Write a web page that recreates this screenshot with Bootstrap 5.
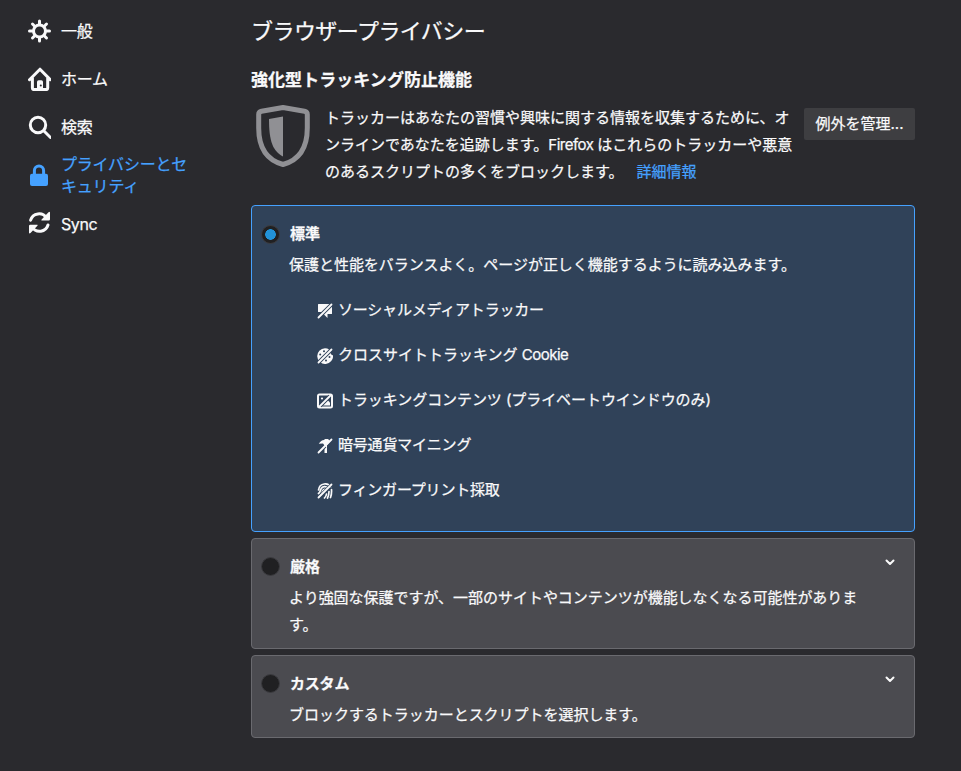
<!DOCTYPE html>
<html lang="ja">
<head>
<meta charset="utf-8">
<meta name="viewport" content="width=device-width, initial-scale=1">
<title>ブラウザープライバシー</title>
<link rel="stylesheet" href="https://cdn.jsdelivr.net/npm/bootstrap@5.3.0/dist/css/bootstrap.min.css">
<style>
  body { background: #2a2a2e; color: #f9f9fa; font-family: Inter, "Noto Sans CJK JP", sans-serif; font-size: 15px; line-height: 27px; min-height: 771px; overflow: hidden; -webkit-text-stroke: .25px currentColor; }
  .side { width: 251px; padding: 7px 0 0 28px; }
  .side .nav-link { height: 48px; padding: 0; color: #f9f9fa; font-size: 16px; line-height: 22px; gap: 10px; }
  .side .nav-link.active { color: #45a1ff; }
  .side svg { width: 23px; height: 24px; flex: none; }
  .side .label { letter-spacing: -.2px; white-space: nowrap; }
  .side .latin { letter-spacing: -.4px; padding-top: 1px; }
  .pane { width: 664px; padding-top: 15px; }
  .page-title { font-size: 22px; line-height: 32px; letter-spacing: -.55px; font-weight: 400; margin: 0 0 20px; }
  .section-title { font-size: 17px; line-height: 26px; letter-spacing: .05px; font-weight: 700; margin: 0 0 11px; }
  .intro { height: 101px; }
  .shield { width: 64px; height: 64px; margin-right: 10px; }
  .intro-text { width: 479px; white-space: nowrap; }
  .intro-text a { margin-left: 13px; }
  .accent { color: #45a1ff; }
  .latin { letter-spacing: -.5px; }
  .btn-manage, .btn-manage:hover { width: 111px; height: 32px; background: #3e3e41; color: #f9f9fa; border: 0; border-radius: 2px; font-size: 15px; line-height: 32px; margin-top: 4px; }
  .option { border: 1px solid #6a6a6f; border-radius: 4px; background: #4b4b50; padding: 14px 10px 0 9px; margin-bottom: 6px; }
  .option.selected { background: #304259; border-color: #45a1ff; }
  .h-standard { height: 327px; } .h-strict { height: 111px; } .h-custom { height: 83px; }
  .option-title { font-weight: 700; margin-left: 10px; }
  .option .form-check-input { width: 19px; height: 19px; margin: 0 0 1px; background: #202022; border: 1px solid #3b3b3f; box-shadow: none; }
  .option .form-check-input:checked { margin: 1px 0 0; background: radial-gradient(circle, #2292d8 0 5px, #202022 5.6px); }
  .desc { margin: 4px 0 0 28px; white-space: nowrap; letter-spacing: -.03px; }
  .trackers { margin: 18px 0 0 56px; }
  .trackers li { height: 27px; margin-bottom: 18px; gap: 5px; white-space: nowrap; }
  .trackers svg { width: 16px; height: 16px; margin-top: 2px; }
  .trackers .gap-line { stroke: #304259; stroke-width: 3.8; fill: none; }
  .trackers .slash { stroke: currentColor; stroke-width: 1.8; stroke-linecap: round; fill: none; }
  .tight { letter-spacing: -.2px; }
  .tight-less { letter-spacing: -.07px; }
  .chev { width: 10px; height: 7px; margin: -8px 9px 0 auto; }
</style>
</head>
<body class="d-flex">
<aside class="side flex-shrink-0">
  <nav class="nav flex-column flex-nowrap">
    <a class="nav-link d-flex align-items-center" href="#"><svg viewBox="0 0 23 24"><g transform="translate(11.5 12)" fill="none" stroke="currentColor"><circle r="6" stroke-width="3"/><g stroke-width="3" stroke-linecap="round"><path d="M0-7V-10M0 7V10M-7 0H-10M7 0H10M5-5L7-7M-5-5L-7-7M5 5L7 7M-5 5L-7 7"/></g></g></svg><span class="label">一般</span></a>
    <a class="nav-link d-flex align-items-center" href="#"><svg viewBox="0 0 23 24"><path d="M1.5 12.7L12 2.2 22.3 12.7M4.4 11V21.1Q4.4 22.6 5.9 22.6H18.2Q19.7 22.6 19.7 21.1V11" fill="none" stroke="currentColor" stroke-width="3" stroke-linecap="round" stroke-linejoin="round"/><path d="M9 23V15Q9 13.3 10.7 13.3H13.3Q15 13.3 15 15V23Z" fill="currentColor"/><circle cx="12.8" cy="18.5" r="1" fill="#2a2a2e"/></svg><span class="label">ホーム</span></a>
    <a class="nav-link d-flex align-items-center" href="#"><svg viewBox="0 0 23 24"><g fill="none" stroke="currentColor" stroke-width="3" stroke-linecap="round"><circle cx="10" cy="10" r="7.7"/><path d="M16 16L22.3 22.3"/></g></svg><span class="label">検索</span></a>
    <a class="nav-link active d-flex align-items-center" href="#"><svg viewBox="0 0 23 24"><path d="M6.4 12V7.5a4.6 4.6 0 0 1 9.2 0V12" fill="none" stroke="currentColor" stroke-width="3"/><rect x="2" y="10.8" width="18" height="12.2" rx="2" fill="currentColor"/></svg><span class="label">プライバシーとセ<br>キュリティ</span></a>
    <a class="nav-link d-flex align-items-center" href="#"><svg viewBox="0 0 23 24"><g fill="none" stroke="currentColor" stroke-width="3" stroke-linecap="round"><path d="M2.6 9.2A8.8 8.8 0 0 1 18.5 7M20 14A8.8 8.8 0 0 1 4.2 16.3"/></g><path d="M22 1.5V8.3Q22 9.5 20.8 9.5H13.8Q12.8 9.5 13.6 8.6L20.5 1.3Q21.8.2 22 1.5ZM1 21.7V15Q1 13.8 2.2 13.8H9.2Q10.2 13.8 9.4 14.7L2.5 22Q1.2 23 1 21.7Z" fill="currentColor"/></svg><span class="label latin">Sync</span></a>
  </nav>
</aside>
<main class="pane flex-shrink-0">
  <h1 class="page-title">ブラウザープライバシー</h1>
  <h2 class="section-title">強化型トラッキング防止機能</h2>
  <section class="intro d-flex align-items-start">
    <svg class="shield flex-shrink-0" viewBox="0 0 64 64"><path d="M32 3.5L53.5 7.2Q56.3 7.8 56.3 10.5V24C56.3 44 48.5 56 32 60.5 15.5 56 7.7 44 7.7 24V10.5Q7.7 7.8 10.5 7.2Z" fill="none" stroke="#909094" stroke-width="5" stroke-linejoin="round"/><path d="M32 12.5V52.5C22 47 18 38 18 15Z" fill="#909094"/></svg>
    <div class="intro-text">トラッカーはあなたの習慣や興味に関する情報を収集するために、オ<br>ンラインであなたを追跡します。<span class="latin">Firefox </span>はこれらのトラッカーや悪意<br>のあるスクリプトの多くをブロックします。<a class="accent text-decoration-none" href="#">詳細情報</a></div>
    <button class="btn btn-manage p-0" type="button">例外を管理...</button>
  </section>
  <section class="option selected h-standard">
    <label class="d-flex align-items-center"><input class="form-check-input" type="radio" name="level" checked><span class="option-title">標準</span></label>
    <p class="desc">保護と性能をバランスよく。ページが正しく機能するように読み込みます。</p>
    <ul class="trackers list-unstyled">
      <li class="d-flex align-items-center"><svg viewBox="0 0 16 16"><path d="M1.5 1H14.5Q15 1 15 1.5V10.5Q15 11 14.5 11H10.5V15L6.5 11L4 9H1.500Q1 9 1 8.500V1.500Q1 1 1.500 1Z" fill="currentColor"/><path class="gap-line" d="M0 16L16 0"/><path class="slash" d="M1.500 14.500L14.500 1.500"/></svg><span class="tight">ソーシャルメディアトラッカー</span></li>
      <li class="d-flex align-items-center"><svg viewBox="0 0 16 16"><path d="M8 .2Q10.500.2 12 1.500L14 6Q15 7.500 16 7.200A7.900 7.900 0 1 1 8 .2Z" fill="currentColor"/><g fill="#304259"><circle cx="7" cy="3.300" r="1"/><circle cx="3.200" cy="6.500" r="1"/><circle cx="12.500" cy="9" r="1"/><circle cx="9" cy="12.500" r="1"/></g><path class="gap-line" d="M0 16L16 0"/><path class="slash" d="M1.500 14.500L14.500 1.500"/></svg><span>クロスサイトトラッキング <span class="latin">Cookie</span></span></li>
      <li class="d-flex align-items-center"><svg viewBox="0 0 16 16"><rect x="1" y="1.500" width="14" height="13" rx="1.500" stroke="currentColor" stroke-width="2" fill="none"/><path d="M6 12.500L11 7.500 13 9.500V12.500Z" fill="currentColor"/><circle cx="5" cy="5.500" r="1.100" fill="currentColor"/><path d="M3 13L13 3" stroke="#304259" stroke-width="3.600"/><path class="slash" d="M2 14L14 2"/></svg><span class="tight-less">トラッキングコンテンツ (プライベートウインドウのみ)</span></li>
      <li class="d-flex align-items-center"><svg viewBox="0 0 16 16"><path d="M1.800 5.800Q4 2 7 2L8 1H11L12.500 2.500V4L10 7V15H7.500V7.500L6 5.500Z" fill="currentColor"/><path d="M0 16L8 8" stroke="#304259" stroke-width="3.800"/><path class="slash" d="M1.500 14.500L14.500 1.500"/></svg><span class="tight">暗号通貨マイニング</span></li>
      <li class="d-flex align-items-center"><svg viewBox="0 0 16 16"><path d="M1.500 7C2.500-.5 11.500-.5 13.500 4M1.500 10.500C3.500 9 3 7.500 4 6 5.500 3 9 3 11 5M5 10C5.500 6.500 7.500 5.500 9 7M14.500 6.500C14.700 9.500 14.500 12 13.500 14.500M12 8.500C12 11 11.500 13 10.500 15M9.500 11C9.300 12.500 8.500 14 7.500 15" fill="none" stroke="currentColor" stroke-width="1.700" stroke-linecap="round"/><path d="M0 16L16 0" stroke="#304259" stroke-width="3.200"/><path class="slash" d="M1.500 14.500L14.500 1.500"/></svg><span class="tight">フィンガープリント採取</span></li>
    </ul>
  </section>
  <section class="option h-strict">
    <label class="d-flex align-items-center"><input class="form-check-input" type="radio" name="level"><span class="option-title">厳格</span><svg class="chev" viewBox="0 0 10 7"><path d="M1.5 1.5L5 5 8.5 1.5" fill="none" stroke="currentColor" stroke-width="2" stroke-linecap="round" stroke-linejoin="round"/></svg></label>
    <p class="desc">より強固な保護ですが、一部のサイトやコンテンツが機能しなくなる可能性がありま<br>す。</p>
  </section>
  <section class="option h-custom">
    <label class="d-flex align-items-center"><input class="form-check-input" type="radio" name="level"><span class="option-title tight">カスタム</span><svg class="chev" viewBox="0 0 10 7"><path d="M1.5 1.5L5 5 8.5 1.5" fill="none" stroke="currentColor" stroke-width="2" stroke-linecap="round" stroke-linejoin="round"/></svg></label>
    <p class="desc">ブロックするトラッカーとスクリプトを選択します。</p>
  </section>
</main>
<script src="https://cdn.jsdelivr.net/npm/bootstrap@5.3.0/dist/js/bootstrap.bundle.min.js"></script>
</body>
</html>
